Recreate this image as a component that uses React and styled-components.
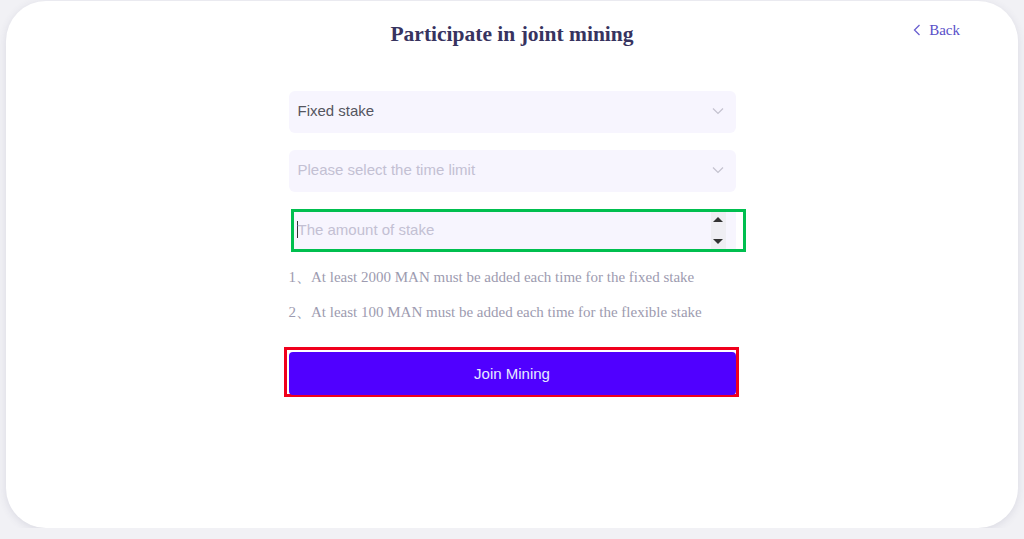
import React from 'react'
import styled, { createGlobalStyle } from 'styled-components'

const GlobalStyle = createGlobalStyle`
  html, body {
    margin: 0;
    padding: 0;
    background: #f1f1f5;
  }
  body {
    font-family: "Liberation Sans", Arial, sans-serif;
  }
`

const Card = styled.div`
  margin: 1px 6px 0;
  height: 527px;
  background: #fff;
  border-radius: 40px;
  box-shadow: 0 2px 8px rgba(60, 60, 100, 0.12);
  box-sizing: border-box;
  padding-top: 19px;
`

const Header = styled.div`
  display: grid;
  grid-template-columns: 1fr auto 1fr;
  align-items: start;
`

const Title = styled.h1`
  grid-column: 2;
  margin: 0;
  font-family: "Liberation Serif", "Times New Roman", serif;
  font-weight: bold;
  font-size: 21.5px;
  line-height: 28px;
  color: #37335f;
`

const BackLink = styled.a`
  justify-self: end;
  margin-right: 58px;
  margin-top: 1px;
  display: flex;
  align-items: center;
  gap: 8px;
  font-family: "Liberation Serif", "Times New Roman", serif;
  font-size: 15px;
  line-height: 18px;
  color: #5a50c8;
  cursor: pointer;
`

const Form = styled.div`
  width: 447px;
  margin: 43px auto 0;
  display: flex;
  flex-direction: column;
`

const Select = styled.div`
  height: 42px;
  background: #f7f5fe;
  border-radius: 6px;
  display: flex;
  align-items: center;
  justify-content: space-between;
  padding: 0 12px 2px 9px;
  margin-bottom: 17px;
  font-size: 15px;
  line-height: 18px;
  box-sizing: border-box;
  color: ${p => (p.$placeholder ? '#c3c0d3' : '#55555f')};
`

const Outline = styled.div`
  width: 455px;
  margin-left: 2px;
  box-sizing: border-box;
  border: 3px solid ${p => p.$color};
  padding: ${p => p.$pad};
`

const AmountBox = styled.div`
  height: 37px;
  background: #f7f5fe;
  display: flex;
  align-items: center;
  margin-right: 7px;
  padding-left: 3px;
  padding-bottom: 2px;
  box-sizing: border-box;
  font-size: 15px;
  color: #c3c0d3;
`

const Caret = styled.span`
  display: inline-block;
  width: 1px;
  height: 17px;
  background: #333;
`

const AmountText = styled.span`
  flex: 1;
`

const Spinner = styled.div`
  width: 15px;
  height: 37px;
  margin-right: 10px;
  margin-bottom: -2px;
  background: #efeef3;
  display: flex;
  flex-direction: column;
  align-items: center;
  justify-content: space-between;
  padding: 5px 0;
  box-sizing: border-box;
`

const Tri = styled.span`
  width: 0;
  height: 0;
  border-left: 5px solid transparent;
  border-right: 5px solid transparent;
  ${p => (p.$up ? 'border-bottom: 5px solid #333;' : 'border-top: 5px solid #333;')}
`

const Notes = styled.div`
  margin-top: 16px;
  display: flex;
  flex-direction: column;
  gap: 17px;
`

const Note = styled.div`
  font-family: "Liberation Serif", "Times New Roman", serif;
  font-size: 15px;
  line-height: 18px;
  color: #9d9bb0;
`

const ButtonOutline = styled(Outline)`
  margin-left: -5px;
  margin-top: 26px;
  height: 50px;
`

const JoinButton = styled.button`
  width: 447px;
  height: 43px;
  border: none;
  border-radius: 4px;
  background: #5000ff;
  color: #e6ecff;
  font-family: "Liberation Sans", Arial, sans-serif;
  font-size: 15px;
  display: block;
`

const Chevron = () => (
  <svg width="12" height="8" viewBox="0 0 12 8" fill="none">
    <path d="M1 1.5 L6 6.5 L11 1.5" stroke="#c4c2cf" strokeWidth="1.2" />
  </svg>
)

export default function App() {
  return (
    <>
      <GlobalStyle />
      <Card>
        <Header>
          <Title>Participate in joint mining</Title>
          <BackLink>
            <svg width="8" height="12" viewBox="0 0 8 12" fill="none">
              <path d="M6.5 1 L1.5 6 L6.5 11" stroke="#6a60d0" strokeWidth="1.3" />
            </svg>
            Back
          </BackLink>
        </Header>
        <Form>
          <Select>
            Fixed stake
            <Chevron />
          </Select>
          <Select $placeholder>
            Please select the time limit
            <Chevron />
          </Select>
          <Outline $color="#00bf4f" $pad="0">
            <AmountBox>
              <Caret />
              <AmountText>The amount of stake</AmountText>
              <Spinner>
                <Tri $up />
                <Tri />
              </Spinner>
            </AmountBox>
          </Outline>
          <Notes>
            <Note>1、At least 2000 MAN must be added each time for the fixed stake</Note>
            <Note>2、At least 100 MAN must be added each time for the flexible stake</Note>
          </Notes>
          <ButtonOutline $color="#f0001c" $pad="2px 0 0 2px">
            <JoinButton>Join Mining</JoinButton>
          </ButtonOutline>
        </Form>
      </Card>
    </>
  )
}
